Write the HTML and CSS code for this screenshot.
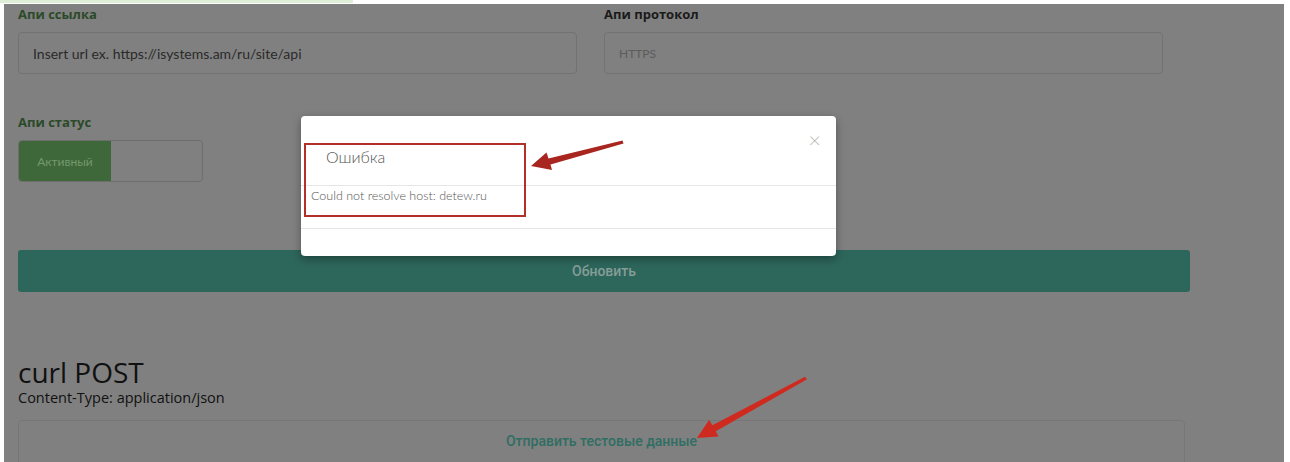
FILE: index.html
```html
<!DOCTYPE html>
<html>
<head>
	<title>API settings</title>
	<meta charset="utf-8">
	<link rel="stylesheet" href="styles.css">
</head>
<body>
	<div class="top_strip"><span class="top_tab"></span></div>
	<div class="page">
		<div class="row">
			<div class="field">
				<label class="lbl lbl_green">Апи ссылка</label>
				<div class="input">Insert url ex. https://isystems.am/ru/site/api</div>
			</div>
			<div class="field">
				<label class="lbl">Апи протокол</label>
				<div class="input input_light">HTTPS</div>
			</div>
		</div>

		<label class="lbl lbl_green lbl_status">Апи статус</label>
		<div class="toggle">
			<span class="toggle_on">Активный</span>
			<span class="toggle_off"></span>
		</div>

		<button class="btn_update">Обновить</button>

		<h2 class="curl_title">curl POST</h2>
		<div class="curl_type">Content-Type: application/json</div>
		<div class="send_box">Отправить тестовые данные</div>

		<div class="modal">
			<div class="modal_header">
				<span class="modal_title">Ошибка</span>
				<span class="modal_close">&times;</span>
			</div>
			<div class="modal_body">Could not resolve host: detew.ru</div>
			<div class="modal_footer"></div>
		</div>
		<div class="mark_box"></div>
	</div>

	<svg class="arrows" width="1290" height="462" viewBox="0 0 1290 462">
		<polygon fill="#a8261f" points="531,166 552,170 550.5,164.5 623.5,143.5 622.5,140.5 548.5,158.5 546.5,152.5"/>
		<polygon fill="#cf2a1f" points="697,438 718.5,436.5 715.8,431.3 807,379.2 805,376.8 712.4,425.2 709.2,419.8"/>
	</svg>
</body>
</html>
```

FILE: styles.css
```css
*, *:before, *:after {
	box-sizing: border-box;
}

body {
	margin: 0;
	background: #fff;
	font-family: 'Lato', 'Open Sans', sans-serif;
	color: #1c1c1c;
	position: relative;
	width: 1290px;
	height: 462px;
	overflow: hidden;
}

.top_strip {
	height: 4px;
}

.top_tab {
	display: block;
	width: 353px;
	height: 3px;
	background: #dfeed6;
}

.page {
	margin-left: 4px;
	width: 1280px;
	height: 458px;
	background: #808080;
	padding-left: 14px;
	overflow: hidden;
}

.row {
	display: grid;
	grid-template-columns: 559px 559px;
	column-gap: 27px;
}

.lbl {
	display: block;
	font-family: 'Open Sans', sans-serif;
	font-weight: 700;
	font-size: 13px;
	line-height: 20px;
	color: #1a1a1a;
}

.lbl_green {
	color: #2b4a29;
}

.input {
	margin-top: 8px;
	height: 42px;
	border: 1px solid #727272;
	border-radius: 4px;
	padding: 0 14px;
	display: flex;
	align-items: center;
	font-size: 14px;
	color: #2a2a2a;
}

.input_light {
	font-size: 12px;
	color: #5c5c5c;
}

.lbl_status {
	margin-top: 38px;
}

.toggle {
	margin-top: 8px;
	width: 185px;
	height: 42px;
	display: flex;
	border: 1px solid #6e6e6e;
	border-radius: 4px;
	overflow: hidden;
}

.toggle_on {
	width: 92px;
	background: #3e6839;
	color: #74996f;
	font-size: 12px;
	display: flex;
	align-items: center;
	justify-content: center;
}

.toggle_off {
	flex: 1;
}

.btn_update {
	display: block;
	margin-top: 68px;
	width: 1172px;
	height: 42px;
	border: none;
	border-radius: 3px;
	background: #2d665b;
	color: #869d98;
	font-family: 'Roboto', sans-serif;
	font-size: 14px;
	font-weight: 500;
	text-align: center;
}

.curl_title {
	margin: 64px 0 0;
	font-family: 'Open Sans', sans-serif;
	font-weight: 400;
	font-size: 28px;
	line-height: 32px;
	color: #111;
}

.curl_type {
	font-family: 'Open Sans', sans-serif;
	font-size: 14.5px;
	line-height: 20px;
	color: #111;
}

.send_box {
	margin-top: 12px;
	width: 1167px;
	height: 48px;
	border: 1px solid #777;
	border-radius: 4px;
	padding-top: 12px;
	text-align: center;
	font-family: 'Roboto', sans-serif;
	font-weight: 500;
	font-size: 14px;
	color: #2f6e63;
}

.modal {
	position: absolute;
	left: 301px;
	top: 116px;
	width: 535px;
	height: 140px;
	background: #fff;
	border-radius: 4px;
	box-shadow: 0 3px 8px rgba(0,0,0,0.35);
	display: flex;
	flex-direction: column;
}

.modal_header {
	height: 70px;
	border-bottom: 1px solid #e6e6e6;
	padding: 30px 15px 0 25px;
	display: flex;
	justify-content: space-between;
	align-items: flex-start;
}

.modal_title {
	font-size: 16px;
	font-weight: 300;
	line-height: 22px;
	color: #555;
}

.modal_close {
	font-size: 22px;
	line-height: 22px;
	margin-top: -17px;
	color: #b5b5b5;
	font-weight: 300;
}

.modal_body {
	height: 43px;
	border-bottom: 1px solid #e6e6e6;
	padding: 2px 10px;
	font-size: 12.5px;
	font-weight: 300;
	line-height: 16px;
	color: #555;
}

.modal_footer {
	flex: 1;
}

.mark_box {
	position: absolute;
	left: 304px;
	top: 143px;
	width: 222px;
	height: 74px;
	border: 2px solid #b3302a;
}

.arrows {
	position: absolute;
	left: 0;
	top: 0;
	pointer-events: none;
}
```
